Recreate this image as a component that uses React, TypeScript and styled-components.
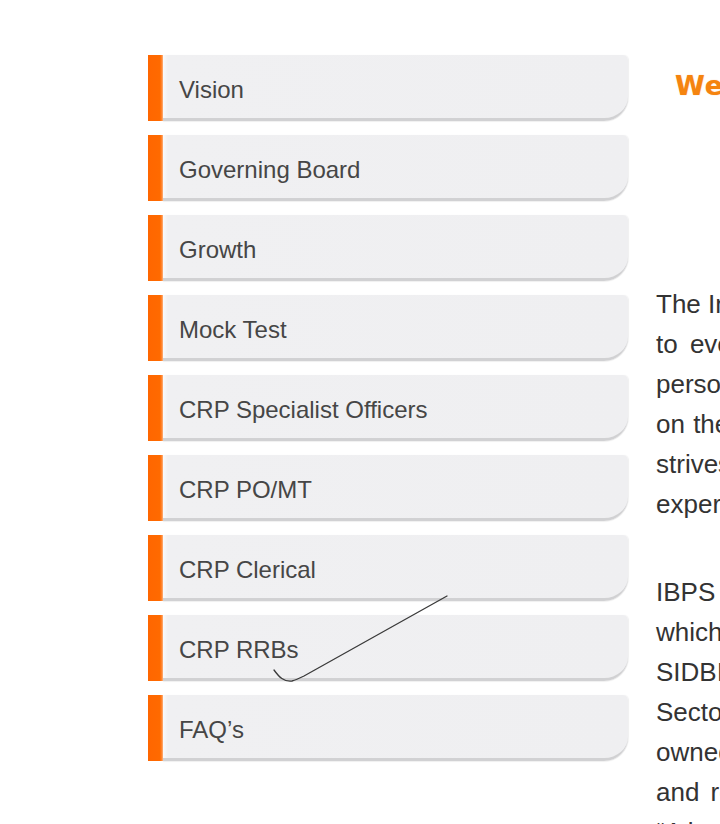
import React from "react";
import styled, { createGlobalStyle } from "styled-components";

const GlobalStyle = createGlobalStyle`
  html, body {
    margin: 0;
    padding: 0;
    background: #ffffff;
    overflow: hidden;
  }
  body {
    font-family: "Liberation Sans", Arial, Helvetica, sans-serif;
  }
`;

const Page = styled.div`
  position: relative;
  display: flex;
  align-items: flex-start;
  gap: 28px;
  width: 1400px;
  min-height: 824px;
  padding-left: 148px;
  box-sizing: border-box;
`;

const Sidebar = styled.nav`
  display: flex;
  flex-direction: column;
  gap: 14px;
  width: 480px;
  flex-shrink: 0;
  padding-top: 55px;
`;

const MenuItem = styled.a`
  display: flex;
  height: 66px;
  text-decoration: none;
  cursor: pointer;
`;

const Accent = styled.span`
  width: 15px;
  flex-shrink: 0;
  background: linear-gradient(to right, #ff6600 0, #ff6a00 12px, #ff8c3a 14px, #ffb88a 15px);
`;

const Tab = styled.span`
  flex: 1;
  box-sizing: border-box;
  background: linear-gradient(to right, #f9f9fa 0, #f0f0f2 5px, #efeff1 100%);
  border-bottom: 3px solid #d1d1d3;
  border-radius: 0 5px 24px 0;
  box-shadow: 1px 0 1px rgba(0, 0, 0, 0.06), 0 1px 1px rgba(0, 0, 0, 0.06);
  padding: 23px 0 0 16px;
  font-size: 24px;
  line-height: 24px;
  color: #464646;
  white-space: nowrap;
`;

const Main = styled.main`
  width: 660px;
  flex-shrink: 0;
  padding-top: 70px;
`;

const Heading = styled.h2`
  margin: 0 0 182px 19px;
  font-family: "DejaVu Sans", Verdana, sans-serif;
  font-size: 27px;
  line-height: 32px;
  font-weight: bold;
  letter-spacing: 1px;
  color: #f5840f;
  text-shadow: 0 0 1px rgba(245, 110, 0, 0.5);
  white-space: nowrap;
`;

const Paragraph = styled.p`
  margin: 0 0 48px;
  font-size: 26px;
  line-height: 40px;
  color: #333333;
`;

const Line = styled.span<{ $spread?: number }>`
  display: block;
  white-space: nowrap;
  word-spacing: ${(p) => p.$spread ?? 0}px;
`;

const Overlay = styled.svg`
  position: absolute;
  left: 0;
  top: 0;
  width: 720px;
  height: 824px;
  pointer-events: none;
`;

const menu = [
  "Vision",
  "Governing Board",
  "Growth",
  "Mock Test",
  "CRP Specialist Officers",
  "CRP PO/MT",
  "CRP Clerical",
  "CRP RRBs",
  "FAQ’s",
];

const para1: [string, number?][] = [
  ["The Institute of Banking Personnel Selection (IBPS)"],
  ["to every organisation engaged in selection of", 5],
  ["personnel for Public Sector Banks and Financial"],
  ["on the requirements of its stakeholders, IBPS", 1],
  ["strives to be a centre of excellence with its"],
  ["expertise in personnel selection."],
];

const para2: [string, number?][] = [
  ["IBPS is a body registered under the Societies"],
  ["which has on its Governing Board nominees from"],
  ["SIDBI, Ministry of Finance, NIBM and Public"],
  ["Sector Banks, Insurance Companies and banks"],
  ["owned by them. IBPS serves the banking sector"],
  ["and related institutions across the country.", 4],
  ["“A knowledge based organisation”"],
];

export default function App() {
  return (
    <>
      <GlobalStyle />
      <Page>
        <Sidebar>
          {menu.map((m) => (
            <MenuItem key={m}>
              <Accent />
              <Tab>{m}</Tab>
            </MenuItem>
          ))}
        </Sidebar>
        <Main>
          <Heading>Welcome to IBPS</Heading>
          <Paragraph>
            {para1.map(([t, s]) => (
              <Line key={t} $spread={s}>
                {t}
              </Line>
            ))}
          </Paragraph>
          <Paragraph>
            {para2.map(([t, s]) => (
              <Line key={t} $spread={s}>
                {t}
              </Line>
            ))}
          </Paragraph>
        </Main>
        <Overlay viewBox="0 0 720 824">
          <path
            d="M274 670 C279 677 284 682 292 681 C296 680 300 678 304 676 L447 596"
            fill="none"
            stroke="#3a3a3a"
            strokeWidth="1.3"
            strokeLinecap="round"
          />
        </Overlay>
      </Page>
    </>
  );
}
